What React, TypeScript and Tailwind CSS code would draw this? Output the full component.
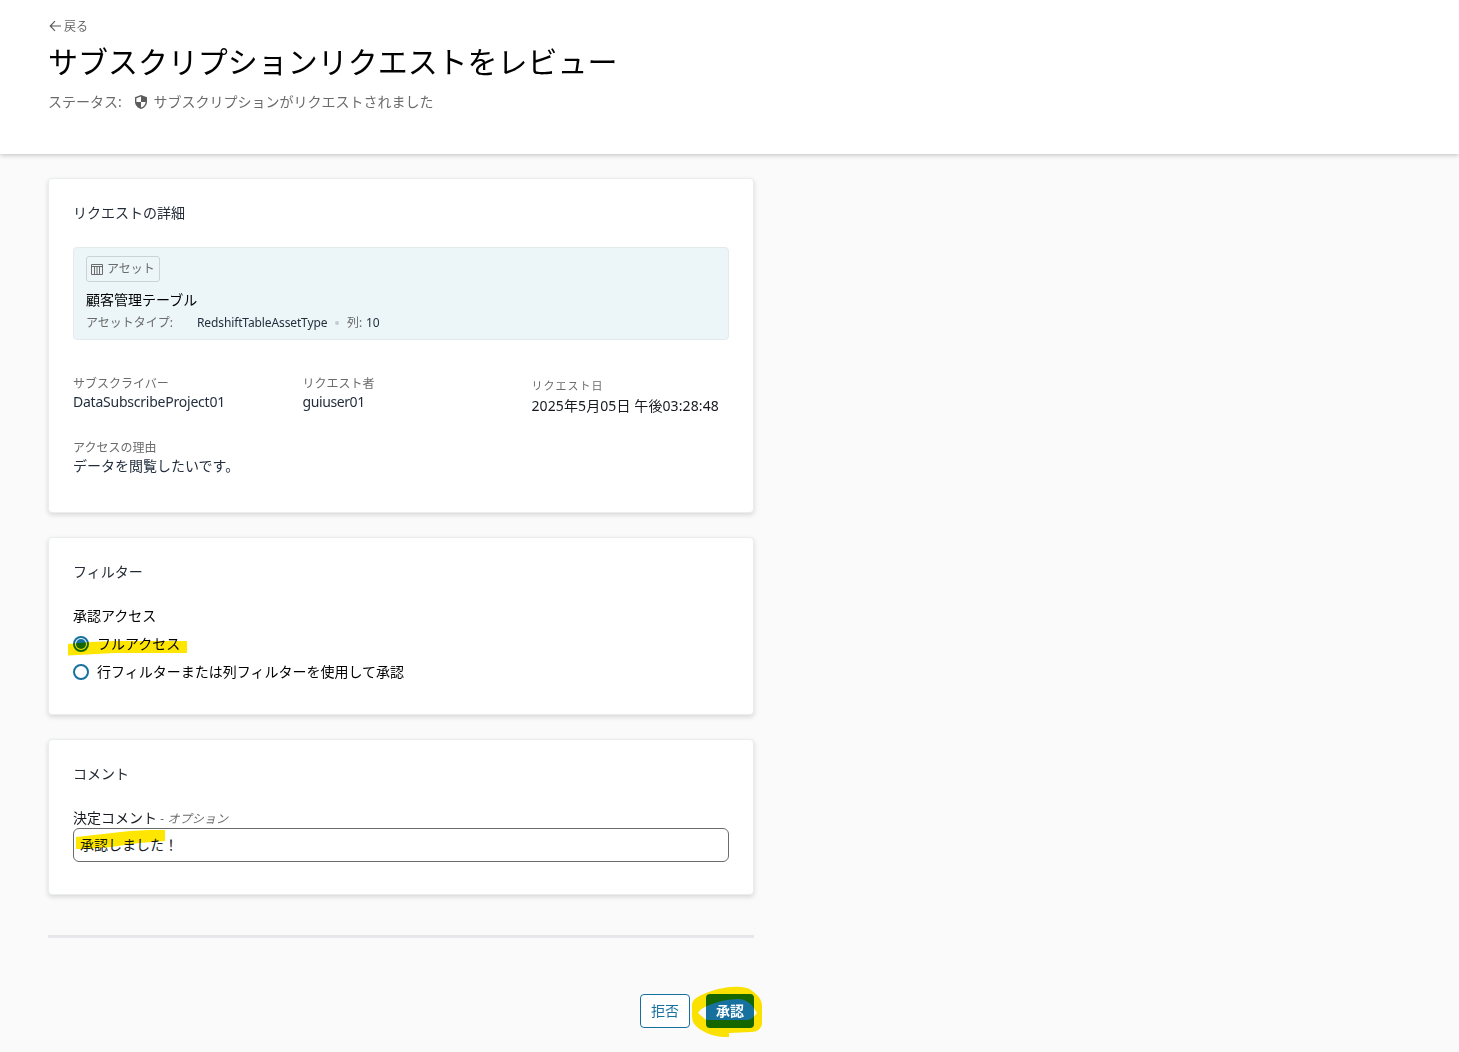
import type { ReactNode } from "react";

function Card({ title, className, children }: { title: string; className: string; children: ReactNode }) {
  return (
    <section
      className={`rounded-[4px] border border-[#eaeded] bg-white px-6 pt-6 shadow-[0_2px_5px_rgba(0,0,0,0.14)] ${className}`}
    >
      <h2 className="h-5 text-sm leading-5 text-[#232b37]">{title}</h2>
      {children}
    </section>
  );
}

function ShieldIcon() {
  return (
    <svg width="14" height="16" viewBox="0 0 14 16" fill="none">
      <path d="M7 1 13 3.2V7.8C13 11.4 10.3 14 7 15 3.7 14 1 11.4 1 7.8V3.2Z" fill="#5c5c5c" />
      <path d="M7 2.6V8H2.4V4.2Z" fill="#fff" />
      <path d="M7 8H11.6C11.5 10.6 9.6 12.7 7 13.5Z" fill="#fff" />
    </svg>
  );
}

function TableIcon() {
  return (
    <svg width="12" height="11" viewBox="0 0 12 11" fill="none" stroke="#6b6b6b">
      <path d="M.5.5H11.5V10.5H.5ZM.5 2.5H11.5M3.5 2.5V10.5M6 2.5V10.5M8.5 2.5V10.5" />
    </svg>
  );
}

function Field({
  label,
  value,
  className,
  tracking = "",
}: {
  label: string;
  value: string;
  className?: string;
  tracking?: string;
}) {
  return (
    <div className={className}>
      <div className="h-[18px] text-xs leading-5 text-[#6b6b6b]">{label}</div>
      <div className={`h-5 text-sm leading-5 text-[#232f3e] ${tracking}`}>{value}</div>
    </div>
  );
}

function Radio({ label, checked }: { label: string; checked?: boolean }) {
  return (
    <label className="flex h-7 items-center gap-2 text-sm leading-5 text-black">
      <span className="flex size-4 shrink-0 items-center justify-center rounded-full border-2 border-[#16719f] bg-white">
        {checked && <span className="size-[10px] rounded-full bg-[#16719f]" />}
      </span>
      {label}
    </label>
  );
}

export default function App() {
  return (
    <div className="h-[1052px] overflow-hidden bg-[#fafafa] font-['Noto_Sans','Noto_Sans_CJK_JP',sans-serif]">
      <header className="h-[154px] bg-white px-12 pt-[17px] shadow-[0_1px_5px_rgba(0,0,0,0.24)]">
        <div className="flex h-5 items-center gap-[2px] text-xs leading-5 text-[#666]">
          <svg width="14" height="12" viewBox="0 0 14 12" fill="none" stroke="#545454" strokeWidth="1.1" className="-mt-[2px]">
            <path d="M13 6H2.5M7 1.2 2.2 6 7 10.8" />
          </svg>
          戻る
        </div>
        <h1 className="mt-[3px] h-[44px] text-[30px] leading-[44px] tracking-[-0.03px] text-black">
          サブスクリプションリクエストをレビュー
        </h1>
        <div className="mt-2 flex h-5 items-center text-sm leading-5 text-[#6b6b6b]">
          <span className="w-[86px]">ステータス:</span>
          <ShieldIcon />
          <span className="ml-[5.5px]">サブスクリプションがリクエストされました</span>
        </div>
      </header>

      <main className="ml-12 mt-6 w-[706px]">
        <Card title="リクエストの詳細" className="h-[335px]">
          <div className="mt-6 h-[93px] rounded-[4px] border border-[#e3eaec] bg-[#ecf5f7] px-3 pt-2">
            <div className="flex h-[26px] w-[74px] items-center gap-1 rounded-[3px] border border-[#ccd3d6] pl-1 text-xs text-[#6b6b6b]">
              <TableIcon />
              アセット
            </div>
            <div className="mt-2 h-5 text-sm leading-5 text-black">顧客管理テーブル</div>
            <div className="mt-1 flex h-[18px] items-center text-xs leading-[18px] text-[#6b6b6b]">
              <span className="w-[111px]">アセットタイプ:</span>
              <span className="w-[130px] whitespace-nowrap tracking-[-0.12px] text-[#232f3e]">RedshiftTableAssetType</span>
              <span className="mx-2 size-1 rounded-full bg-[#c5cbcf]" />
              <span className="w-[19px] whitespace-nowrap">列:</span>
              <span className="text-[#232f3e]">10</span>
            </div>
          </div>
          <div className="mt-[34px] grid grid-cols-[229.5px_229px_1fr]">
            <Field label="サブスクライバー" value="DataSubscribeProject01" tracking="tracking-[-0.23px]" />
            <Field label="リクエスト者" value="guiuser01" tracking="tracking-[-0.4px]" />
            <div className="pt-[3px]">
              <div className="h-[18px] text-[11px] leading-[18px] tracking-[1px] text-[#6b6b6b]">リクエスト日</div>
              <div className="mt-px h-5 whitespace-nowrap text-sm leading-5 tracking-[0.1px] text-[#16191f]">
                2025年5月05日 午後03:28:48
              </div>
            </div>
          </div>
          <Field className="mt-[22px]" label="アクセスの理由" value="データを閲覧したいです。" />
        </Card>

        <Card title="フィルター" className="mt-6 h-[178px]">
          <div className="mt-6 h-5 text-sm leading-5 text-black">承認アクセス</div>
          <div className="relative mt-1">
            <Radio label="フルアクセス" checked />
            <Radio label="行フィルターまたは列フィルターを使用して承認" />
            <svg className="absolute -left-[6px] top-[7px] mix-blend-multiply" width="122" height="20" viewBox="0 0 122 20">
              <path d="M1 7 24 5 48 4 120 4V16H92L48 16 1 18.5Z" fill="#ffe600" />
            </svg>
          </div>
        </Card>

        <Card title="コメント" className="mt-6 h-[156px]">
          <div className="mt-6 h-5 text-sm leading-5 text-[#16191f]">
            決定コメント<span className="text-xs italic tracking-[0.15px] text-[#6b6b6b]"> - オプション</span>
          </div>
          <div className="relative">
            <div className="flex h-[34px] items-center rounded-[6px] border border-[#6b6b6b] bg-white px-[6px] text-sm text-[#16191f]">
              承認しました！
            </div>
            <svg className="absolute left-[2px] top-0 mix-blend-multiply" width="92" height="24" viewBox="0 0 92 24">
              <path d="M1 9 28 6 55 3 74 2H90V13L64 15 36 19 12 21 1 21Z" fill="#ffe600" />
            </svg>
          </div>
        </Card>

        <hr className="mt-10 h-[3px] border-0 bg-[#e6e7eb]" />

        <div className="relative mt-14 flex justify-end gap-4">
          <button className="h-[34px] w-[50px] rounded-[4px] border border-[#16719f] bg-white text-sm text-[#16719f]">拒否</button>
          <button className="h-[34px] w-12 rounded-[4px] bg-[#16719f] text-sm font-bold text-white">承認</button>
          <svg className="absolute -right-[10px] -top-[8px] mix-blend-multiply" width="74" height="54" viewBox="0 0 74 54">
            <path
              fillRule="evenodd"
              fill="#ffe600"
              d="M36 1.5C47 0 57 1 61 4 66 8 72 12 72 20V38C71 43 67 46 61 46L39 47V51H33C22 50 12 46 6 40 2 36 2 32 2 27V19C2 13 9 10 16 7Q26 2.5 36 1.5ZM8 27 15 33 17 34H57C62 34 64 30 67 27 64 22 61 17 56 15 51 12 46 13 42 13.5 34 14 23 17 15 21Q10 23 8 27Z"
            />
          </svg>
        </div>
      </main>
    </div>
  );
}
